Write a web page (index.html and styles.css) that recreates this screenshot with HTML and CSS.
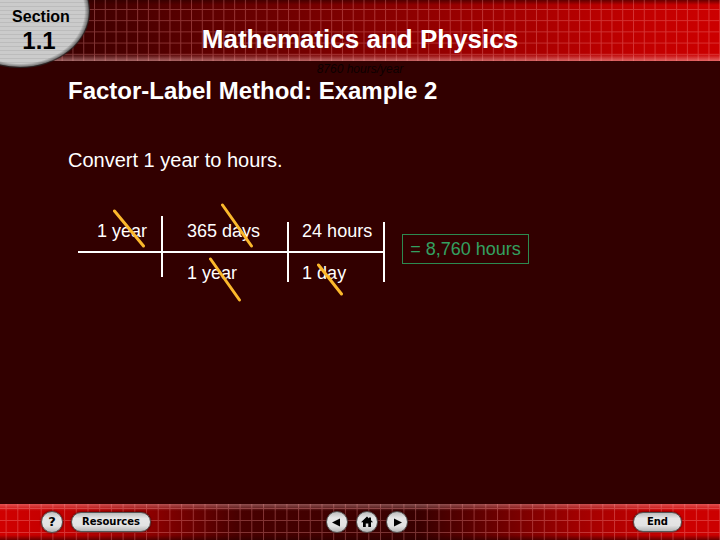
FILE: index.html
```html
<!DOCTYPE html>
<html lang="en">
  <head>
    <meta charset="utf-8" />
    <title>Mathematics and Physics</title>
    <meta name="viewport" content="width=device-width, initial-scale=1" />
    <link rel="stylesheet" href="styles.css">
  </head>

  <body>
    <header class="header">
      <svg class="mesh" aria-hidden="true">
        <defs>
          <pattern id="mesh-top" x="94" y="9" width="10.78" height="11.2" patternUnits="userSpaceOnUse">
            <path d="M.5 0V11.2M0 .5H10.78" />
          </pattern>
        </defs>
        <rect width="100%" height="100%" fill="url(#mesh-top)" />
      </svg>
      <h1 class="title">Mathematics and Physics</h1>
      <div class="badge">
        <svg class="badge-shape" viewBox="0 0 96 74" aria-hidden="true">
          <defs>
            <pattern id="stripes" width="4" height="4" patternUnits="userSpaceOnUse">
              <rect width="4" height="4" fill="#cbcbcb" />
              <rect y="2" width="4" height="1" fill="#bcbcbc" />
            </pattern>
            <radialGradient id="edge">
              <stop offset=".92" stop-color="#333" stop-opacity="0" />
              <stop offset=".97" stop-color="#333" stop-opacity=".5" />
              <stop offset="1" stop-color="#222" stop-opacity=".9" />
            </radialGradient>
          </defs>
          <ellipse cx="20" cy="11" rx="69" ry="56" fill="url(#stripes)" />
          <ellipse cx="20" cy="11" rx="70" ry="57" fill="url(#edge)" />
        </svg>
        <span class="badge-label">Section</span>
        <span class="badge-number">1.1</span>
      </div>
    </header>

    <main class="content">
      <p class="hint">8760 hours/year</p>
      <h2 class="subtitle">Factor-Label Method: Example 2</h2>
      <p class="task">Convert 1 year to hours.</p>

      <div class="work">
        <div class="chain">
          <table class="factors">
            <tr>
              <td>1 year</td>
              <td>365 days</td>
              <td>24 hours</td>
            </tr>
            <tr>
              <td></td>
              <td>1 year</td>
              <td>1 day</td>
            </tr>
          </table>
          <!-- cancelled units -->
          <svg class="strikes" viewBox="0 0 307 100" aria-hidden="true">
            <path d="M36.500 3L65.500 38M144.500 -3L173.500 38M132.500 51L161.500 92M240.500 57L263.500 86" />
          </svg>
        </div>
        <output class="answer">= 8,760 hours</output>
      </div>
    </main>

    <footer class="footer">
      <svg class="mesh" aria-hidden="true">
        <defs>
          <pattern id="mesh-bottom" x="29" y="4" width="11.7" height="12" patternUnits="userSpaceOnUse">
            <path d="M.5 0V12M0 .5H11.7" />
          </pattern>
        </defs>
        <rect width="100%" height="100%" fill="url(#mesh-bottom)" />
      </svg>
      <div class="group">
        <button class="btn round help" type="button">?</button>
        <button class="btn pill" type="button">Resources</button>
      </div>
      <nav class="group pager">
        <button class="btn round" type="button" aria-label="Previous">
          <svg width="22" height="22" viewBox="0 0 22 22"><path d="M6 11.500L14 7.500V15.500Z" /></svg>
        </button>
        <button class="btn round" type="button" aria-label="Home">
          <svg width="22" height="22" viewBox="0 0 22 22"><path d="M11 5.500L13 7.400V6.500H15V9.300L17 11.300H15V16H12.300V12.500H9.800V16H7V11.300H5Z" /></svg>
        </button>
        <button class="btn round" type="button" aria-label="Next">
          <svg width="22" height="22" viewBox="0 0 22 22"><path d="M16 11.500L8 7.500V15.500Z" /></svg>
        </button>
      </nav>
      <div class="group end">
        <button class="btn pill" type="button">End</button>
      </div>
    </footer>
  </body>
</html>
```
FILE: styles.css
```css
* {
  box-sizing: border-box;
}
body {
  margin: 0;
  min-height: 100vh;
  display: flex;
  flex-direction: column;
  background-color: #320000;
  color: #ffffff;
  font-family: "Liberation Sans", Arial, sans-serif;
}

/* top bar */
.header {
  position: relative;
  padding: 24px 0 7px;
  background:
    linear-gradient(to bottom, rgba(40, 0, 0, 0.6), rgba(40, 0, 0, 0) 5px),
    linear-gradient(to top, rgba(255, 200, 200, 0.5), rgba(255, 200, 200, 0) 7px),
    linear-gradient(to right, #3c0000 10%, #650000 33%, #960000 62%, #c00000 88%, #cc0000);
}
.mesh {
  position: absolute;
  top: 0;
  left: 0;
  width: 100%;
  height: 100%;
}
.mesh path {
  fill: none;
  stroke: #ffa0a0;
  stroke-opacity: 0.32;
}
.title {
  position: relative;
  margin: 0;
  font-size: 26px;
  line-height: 30px;
  text-align: center;
}
.badge {
  position: absolute;
  top: 0;
  left: 0;
  z-index: 1;
  width: 82px;
  padding-top: 8px;
  color: #000000;
  font-weight: bold;
  text-align: center;
}
.badge-shape {
  position: absolute;
  top: 0;
  left: 0;
  width: 96px;
  height: 74px;
}
.badge-label,
.badge-number {
  position: relative;
  display: block;
}
.badge-label {
  font-size: 16px;
  line-height: 18px;
}
.badge-number {
  padding-right: 4px;
  font-size: 24px;
  line-height: 30px;
}

/* slide body */
.content {
  flex: 1;
  padding: 0 68px;
}
.hint {
  margin: 0;
  color: #0c0000;
  font-size: 12px;
  font-style: italic;
  line-height: 16px;
  text-align: center;
}
.subtitle {
  margin: 0;
  font-size: 24px;
  line-height: 28px;
}
.task {
  margin: 44px 0 37px;
  font-size: 20px;
  line-height: 22px;
}
.work {
  display: flex;
  align-items: center;
  gap: 17px;
  padding-left: 10px;
  font-size: 18px;
}
.chain {
  position: relative;
  padding: 8px 0;
}
.factors {
  border-collapse: collapse;
}
.factors td {
  position: relative;
  height: 36px;
  padding: 6px 29px 0 24px;
  line-height: 18px;
  vertical-align: top;
  white-space: nowrap;
}
.factors td:first-child {
  padding-left: 19px;
  padding-right: 16px;
}
.factors td:last-child {
  padding-left: 13px;
  padding-right: 13px;
}
.factors tr:first-child td {
  border-bottom: 2px solid #ffffff;
}
.factors tr:last-child td {
  height: 30px;
  padding-top: 11px;
}
/* dividers, the first one sits a little higher */
.factors td::after {
  content: "";
  position: absolute;
  top: 0;
  right: 0;
  bottom: 0;
  width: 2px;
  background-color: #ffffff;
}
.factors tr:first-child td + td::after {
  top: 6px;
}
.factors tr:last-child td:first-child::after {
  bottom: 5px;
}
.strikes {
  position: absolute;
  top: 0;
  left: 0;
  width: 307px;
  height: 100px;
  overflow: visible;
}
.strikes path {
  fill: none;
  stroke: #fbb82c;
  stroke-width: 3;
  stroke-linecap: round;
}
.answer {
  padding: 4px 7px;
  border: 1px solid #2c8a50;
  color: #33a060;
  line-height: 20px;
}

/* bottom bar */
.footer {
  position: relative;
  display: grid;
  grid-template-columns: 1fr auto 1fr;
  padding: 7px 38px 7px 41px;
  background:
    linear-gradient(to bottom, rgba(255, 200, 200, 0.4), rgba(255, 200, 200, 0) 7px),
    linear-gradient(to top, rgba(40, 0, 0, 0.6), rgba(40, 0, 0, 0) 5px),
    linear-gradient(to right, #d00000, #c00000 10%, #8c0000 21%, #480000 33%, #380000 58%, #a00000 80%, #cc0000 94%);
}
.group {
  position: relative;
  display: flex;
  align-items: center;
  gap: 8px;
}
.pager {
  padding-left: 10px;
}
.end {
  justify-content: flex-end;
}
.btn {
  padding: 0;
  border: 1px solid #555555;
  background: linear-gradient(to bottom, #bcbcbc, #e6e6e6 30%, #e2e2e2 70%, #b4b4b4);
  box-shadow: 0 0 2px #300000;
  color: #000000;
  font: bold 10px/18px "DejaVu Sans", Verdana, sans-serif;
}
.round {
  display: flex;
  align-items: center;
  justify-content: center;
  width: 22px;
  height: 22px;
  border-radius: 50%;
}
.round svg {
  flex: none;
}
.help {
  font-size: 13px;
}
.pill {
  padding: 0 10px;
  border-radius: 10px;
}
.end .pill {
  padding: 0 13px;
}
```
